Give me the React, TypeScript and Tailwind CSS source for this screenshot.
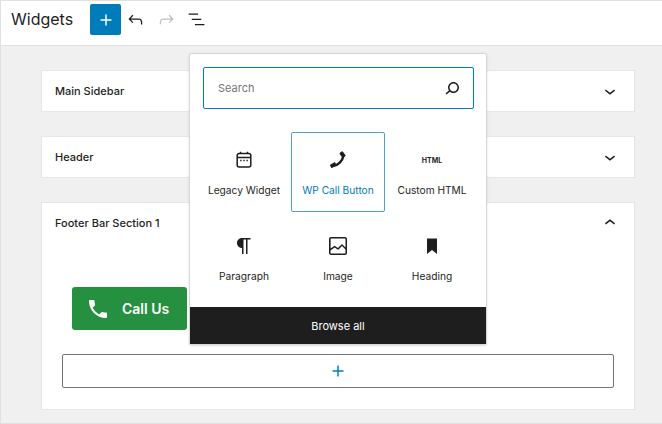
import React from 'react';

const font = { fontFamily: 'Inter, "Liberation Sans", sans-serif' };

function WpIcon({ d, className = '', size = 24 }: { d: string; className?: string; size?: number }) {
  return (
    <svg viewBox="0 0 24 24" width={size} height={size} fill="currentColor" className={className}>
      <path d={d} />
    </svg>
  );
}

const icons = {
  plus: 'M18 11.2h-5.2V6h-1.6v5.2H6v1.6h5.2V18h1.6v-5.2H18z',
  undo: 'M18.3 11.7c-.6-.6-1.4-.9-2.3-.9H6.7l2.9-3.3-1.1-1-4.5 5L8.5 16l1-1-2.7-2.7H16c.5 0 .9.2 1.3.5 1 1 1 3.4 1 4.5v.3h1.5v-.2c0-1.5 0-4.3-1.5-5.7z',
  redo: 'M15.6 6.5l-1.1 1 2.9 3.3H8c-.9 0-1.7.3-2.3.9-1.4 1.5-1.4 4.2-1.4 5.6v.2h1.5v-.3c0-1.1 0-3.5 1-4.5.3-.3.7-.5 1.3-.5h9.2L14.5 15l1.1 1.1 4.6-4.6-4.6-5z',
  list: 'M13.8 5.2H3v1.5h10.8V5.2zm-3.6 12v1.5H21v-1.5H10.2zm7.2-6H6.6v1.5h10.8v-1.5z',
  search: 'M13.5 6C10.5 6 8 8.5 8 11.5c0 1.1.3 2.1.9 3l-3.4 3 1 1.1 3.4-2.9c1 .9 2.2 1.4 3.6 1.4 3 0 5.5-2.5 5.5-5.5C19 8.5 16.5 6 13.5 6zm0 9.5c-2.2 0-4-1.8-4-4s1.8-4 4-4 4 1.8 4 4-1.8 4-4 4z',
  down: 'M17.5 11.6L12 16l-5.5-4.4.9-1.2L12 14l4.5-3.6 1 1.2z',
  up: 'M6.5 12.4L12 8l5.5 4.4-.9 1.2L12 10l-4.5 3.6-1-1.2z',
  paragraph: 'm9.99609 14v-.2251l.00391.0001v6.225h1.5v-14.5h2.5v14.5h1.5v-14.5h3v-1.5h-8.50391c-2.76142 0-5 2.23858-5 5 0 2.7614 2.23858 5 5 5z',
  image: 'M19 3H5c-1.1 0-2 .9-2 2v14c0 1.1.9 2 2 2h14c1.1 0 2-.9 2-2V5c0-1.1-.9-2-2-2zM5 4.5h14c.3 0 .5.2.5.5v8.4l-3-2.9c-.3-.3-.8-.3-1 0L11.9 14 9 12c-.3-.2-.6-.2-.8 0l-3.6 2.6V5c-.1-.3.1-.5.4-.5zm14 15H5c-.3 0-.5-.2-.5-.5v-2.4l4.1-3 3 1.9c.3.2.7.2.9-.1L16 12l3.5 3.4V19c0 .3-.2.5-.5.5z',
  bookmark: 'M7 4.5h10V20l-5-3.9L7 20z',
  call: 'M6.62 10.79c1.44 2.83 3.76 5.14 6.59 6.59l2.2-2.2c.27-.27.67-.36 1.02-.24 1.12.37 2.33.57 3.57.57.55 0 1 .45 1 1V20c0 .55-.45 1-1 1-9.39 0-17-7.61-17-17 0-.55.45-1 1-1h3.5c.55 0 1 .45 1 1 0 1.25.2 2.45.57 3.57.11.35.03.74-.25 1.02l-2.2 2.2z',
};

function CalendarIcon() {
  return (
    <svg viewBox="0 0 24 24" width={24} height={24} fill="none" stroke="currentColor">
      <rect x="5.2" y="5.5" width="13.6" height="13.5" rx="2" strokeWidth="1.5" />
      <path d="M5 9.5h14M8.5 3.8v2M15.5 3.8v2" strokeWidth="1.5" />
      <path d="M8.2 12.5h1.4M11.3 12.5h1.4M14.4 12.5h1.4" strokeWidth="1.5" />
    </svg>
  );
}

function HandsetIcon() {
  return (
    <svg viewBox="0 0 24 24" width={24} height={24} fill="currentColor">
      <path d="M17.2 8.5C16.6 12.8 12 17.5 7.5 17.8" fill="none" stroke="currentColor" strokeWidth="2.4" />
      <rect x="14.6" y="3.6" width="4" height="6" rx="1" transform="rotate(-38 16.6 6.6)" />
      <rect x="4.2" y="15.2" width="6" height="3.8" rx="1" transform="rotate(-30 7.2 17.1)" />
    </svg>
  );
}

function SidebarCard({ title, open, children }: { title: string; open?: boolean; children?: React.ReactNode }) {
  return (
    <section className="bg-white border border-[#e6e6e6]">
      <div className="h-[40px] flex items-center justify-between pl-[13px] pr-[13px]">
        <h2 className="text-[11px] font-medium text-[#1e1e1e]">{title}</h2>
        <WpIcon d={open ? icons.up : icons.down} className="text-[#1e1e1e]" size={22} />
      </div>
      {children}
    </section>
  );
}

function BlockTile({ label, icon, selected }: { label: string; icon: React.ReactNode; selected?: boolean }) {
  return (
    <div
      className={`h-[80px] flex flex-col items-center rounded-[2px] pt-[15px] ${
        selected ? 'border border-[#4f9fd1] text-[#007cba]' : 'border border-transparent text-[#1e1e1e]'
      }`}
    >
      <div className="h-[24px] flex items-center justify-center text-[#1e1e1e]">{icon}</div>
      <span className="mt-[10px] text-[10.2px] leading-[16px]">{label}</span>
    </div>
  );
}

export default function App() {
  return (
    <div style={font} className="relative w-[662px] h-[424px] overflow-hidden bg-[#f0f0f0] border-t border-l border-b border-[#e0e0e0]">
      <header className="h-[45px] bg-white border-b border-[#e0e0e0] flex items-start pl-[10px] pt-[3px]">
        <h1 className="text-[16px] leading-[31px] text-[#1e1e1e] w-[79px]">Widgets</h1>
        <button className="w-[31px] h-[31px] rounded-[2px] bg-[#007cba] text-white flex items-center justify-center">
          <WpIcon d={icons.plus} size={22} />
        </button>
        <div className="h-[31px] flex items-center ml-[4px] gap-[9.5px]">
          <WpIcon d={icons.undo} className="text-[#1e1e1e]" size={21} />
          <WpIcon d={icons.redo} className="text-[#c0c0c0]" size={21} />
          <WpIcon d={icons.list} className="text-[#1e1e1e]" size={21} />
        </div>
      </header>

      <main className="pl-[40px] pr-[27px] pt-[24px] flex flex-col gap-[24px]">
        <SidebarCard title="Main Sidebar" />
        <SidebarCard title="Header" />
        <SidebarCard title="Footer Bar Section 1" open>
          <div className="pl-[30px] pt-[44px]">
            <div className="w-[115px] h-[43px] rounded-[3px] bg-[#25903f] text-white flex items-center pl-[14px]">
              <WpIcon d={icons.call} size={24} />
              <span className="ml-[12px] text-[14px] font-semibold">Call Us</span>
            </div>
          </div>
          <div className="mx-[20px] mt-[24px] mb-[21px] h-[34px] rounded-[2px] border-[1.5px] border-[#757575] flex items-center justify-center text-[#007cba]">
            <WpIcon d={icons.plus} size={22} />
          </div>
        </SidebarCard>
      </main>

      {/* Block inserter popover */}
      <div className="absolute left-[188px] top-[52px] w-[298px] h-[292px] bg-white border border-[#d8d8d8] rounded-[2px] flex flex-col shadow-sm">
        <div className="ml-[13px] mr-[12px] mt-[13px] h-[42px] rounded-[2px] border-[1.5px] border-[#007cba] flex items-center justify-between pl-[14px] pr-[9px]">
          <span className="text-[11px] text-[#757575]">Search</span>
          <WpIcon d={icons.search} className="text-[#1e1e1e]" />
        </div>
        <div className="grid grid-cols-3 gap-y-[6px] px-[7px] mt-[23px] flex-1 content-start">
          <BlockTile label="Legacy Widget" icon={<CalendarIcon />} />
          <BlockTile label="WP Call Button" icon={<HandsetIcon />} selected />
          <BlockTile label="Custom HTML" icon={<span className="pt-[2px] text-[7px] font-bold">HTML</span>} />
          <BlockTile label="Paragraph" icon={<WpIcon d={icons.paragraph} />} />
          <BlockTile label="Image" icon={<WpIcon d={icons.image} />} />
          <BlockTile label="Heading" icon={<WpIcon d={icons.bookmark} />} />
        </div>
        <div className="h-[37px] pt-[1px] bg-[#1e1e1e] text-white text-[11px] flex items-center justify-center">Browse all</div>
      </div>
    </div>
  );
}
